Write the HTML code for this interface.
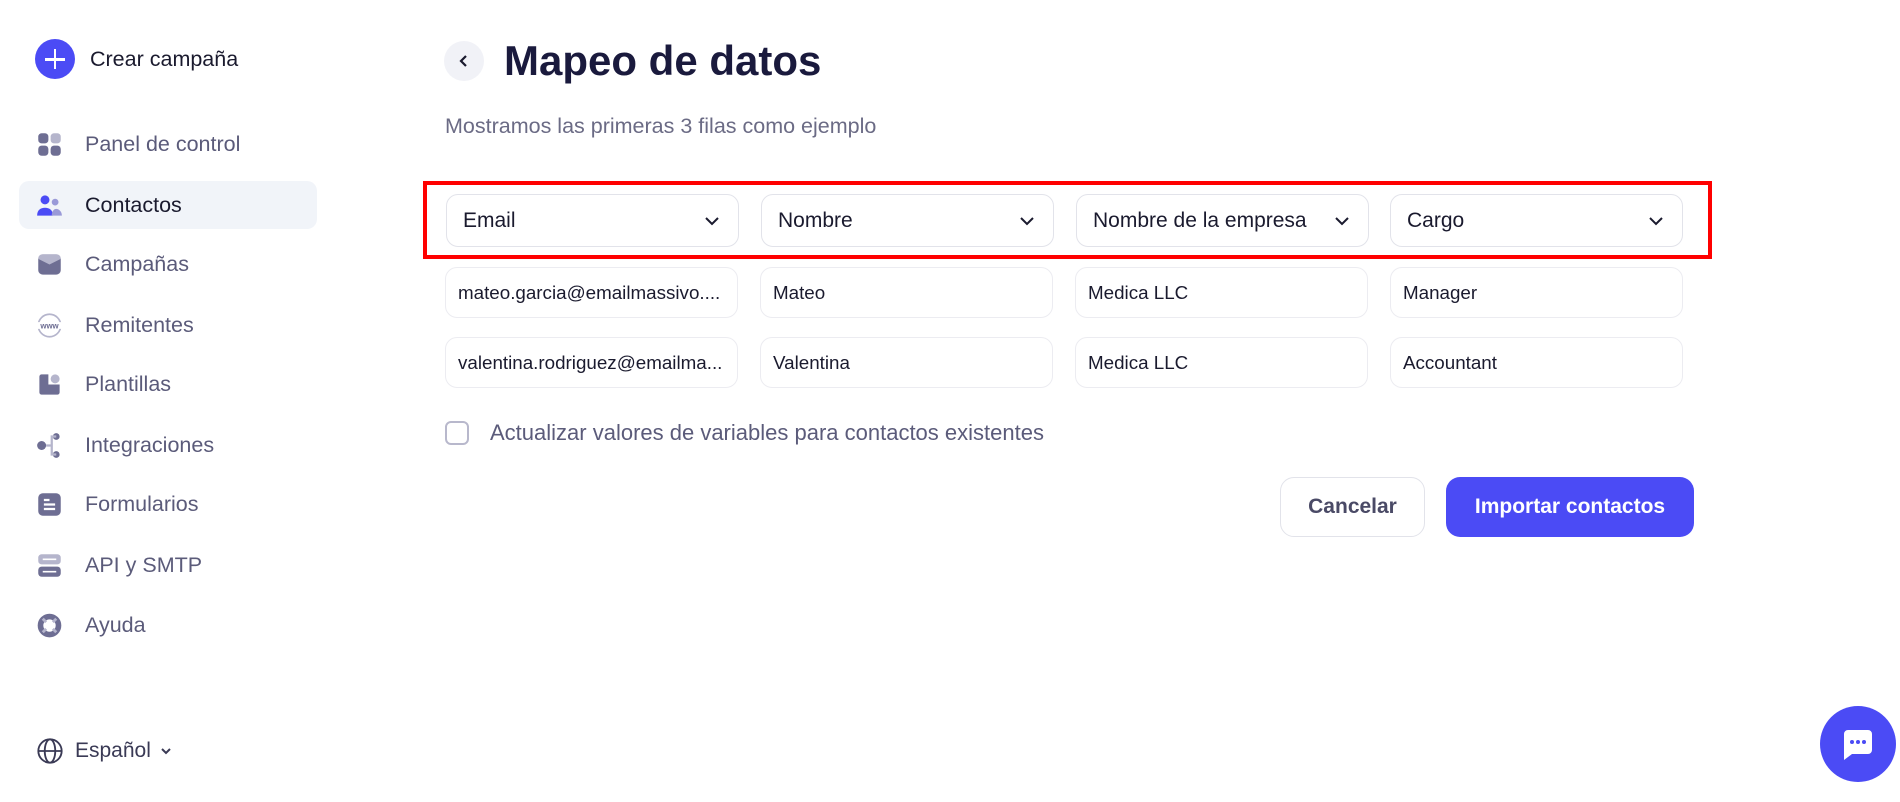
<!DOCTYPE html>
<html><head><meta charset="utf-8"><style>
*{box-sizing:border-box;margin:0;padding:0}
body{width:1900px;height:802px;background:#fff;font-family:"Liberation Sans",sans-serif;position:relative;overflow:hidden;color:#1a1a3d}
.abs{position:absolute}
.nav{position:absolute;left:19px;width:298px;height:48px;display:flex;align-items:center;font-size:21.5px;color:#5b5b7a}
.nav svg{position:absolute;left:17px;width:27px;height:27px}
.nav span{position:absolute;left:66px}
.sel{position:absolute;top:194px;width:293px;height:53px;border:1.5px solid #e2e3ea;border-radius:12px;font-size:21px;color:#1a1a2e;display:flex;align-items:center;padding-left:16px;background:#fff;white-space:nowrap}
.sel svg{position:absolute;right:18px;top:20px}
.cell{position:absolute;width:293px;height:51px;border:1.5px solid #ececf1;border-radius:12px;font-size:18.8px;color:#1a1a2e;display:flex;align-items:center;padding-left:12px;white-space:nowrap;overflow:hidden}
</style></head><body>
<div class="abs" style="left:35px;top:39px;width:40px;height:40px;border-radius:50%;background:#4b4bf5"></div>
<div class="abs" style="left:45px;top:58px;width:20px;height:2.5px;background:#fff"></div>
<div class="abs" style="left:53.75px;top:49px;width:2.5px;height:20px;background:#fff"></div>
<div class="abs" style="left:90px;top:47px;font-size:21.5px;color:#1a1a2e">Crear campaña</div>

<div class="nav" style="top:120px"><svg viewBox="0 0 24 24"><rect x="2" y="2" width="9" height="9" rx="3" fill="#6e6e93"/><rect x="13" y="2" width="9" height="9" rx="3" fill="#b5b5cc"/><rect x="2" y="13" width="9" height="9" rx="3" fill="#6e6e93"/><rect x="13" y="13" width="9" height="9" rx="3" fill="#6e6e93"/></svg><span>Panel de control</span></div>
<div class="abs" style="left:19px;top:181px;width:298px;height:48px;border-radius:10px;background:#f1f4f9"></div>
<div class="nav" style="top:181px;color:#1a1a2e"><svg viewBox="0 0 24 24"><circle cx="8" cy="7" r="4" fill="#4b4bf5"/><path d="M1 21c0-5 3-7 7-7s7 2 7 7z" fill="#4b4bf5"/><circle cx="17" cy="9" r="3" fill="#9a9ad8"/><path d="M14 21c0-4 2-6 4-6s5 2 5 6z" fill="#9a9ad8"/></svg><span>Contactos</span></div>
<div class="nav" style="top:240px"><svg viewBox="0 0 24 24"><rect x="2" y="3" width="20" height="18" rx="4" fill="#6e6e93"/><path d="M2 7c0-3 2-4 4-4h12c2 0 4 1 4 4l-10 5z" fill="#b5b5cc"/></svg><span>Campañas</span></div>
<div class="nav" style="top:301px"><svg viewBox="0 0 24 24"><circle cx="12" cy="12" r="10" fill="none" stroke="#b5b5cc" stroke-width="1.5"/><rect x="0" y="9" width="24" height="6" fill="#fff"/><text x="12" y="14.5" font-size="7" font-weight="bold" text-anchor="middle" fill="#6e6e93" font-family="Liberation Sans">www</text></svg><span>Remitentes</span></div>
<div class="nav" style="top:360px"><svg viewBox="0 0 24 24"><path d="M3 5a2 2 0 012-2h6v9h10v7a2 2 0 01-2 2H5a2 2 0 01-2-2z" fill="#6e6e93"/><circle cx="17" cy="7" r="4" fill="#b5b5cc"/></svg><span>Plantillas</span></div>
<div class="nav" style="top:421px"><svg viewBox="0 0 24 24"><circle cx="5" cy="12" r="4" fill="#6e6e93"/><circle cx="18" cy="4" r="3" fill="#6e6e93"/><circle cx="18" cy="20" r="3" fill="#6e6e93"/><path d="M18 4h-4v16h4M9 12h5" stroke="#b5b5cc" stroke-width="2" fill="none"/></svg><span>Integraciones</span></div>
<div class="nav" style="top:480px"><svg viewBox="0 0 24 24"><rect x="2" y="2" width="20" height="20" rx="4" fill="#6e6e93"/><path d="M7 8h5M7 12h10M7 16h10" stroke="#fff" stroke-width="2"/></svg><span>Formularios</span></div>
<div class="nav" style="top:541px"><svg viewBox="0 0 24 24"><rect x="2" y="2" width="20" height="9" rx="3" fill="#b5b5cc"/><rect x="2" y="13" width="20" height="9" rx="3" fill="#6e6e93"/><path d="M6 6.5h12M6 17.5h12" stroke="#fff" stroke-width="1.5"/></svg><span>API y SMTP</span></div>
<div class="nav" style="top:601px"><svg viewBox="0 0 24 24"><circle cx="12" cy="12" r="8" fill="none" stroke="#6e6e93" stroke-width="5"/><path d="M6 6l3 3M18 6l-3 3M6 18l3-3M18 18l-3-3" stroke="#b5b5cc" stroke-width="2.5"/></svg><span>Ayuda</span></div>

<svg class="abs" style="left:36px;top:737px" width="28" height="28" viewBox="0 0 24 24" fill="none" stroke="#3a3a55" stroke-width="1.6"><circle cx="12" cy="12" r="10"/><ellipse cx="12" cy="12" rx="4.5" ry="10"/><path d="M2 12h20"/></svg>
<div class="abs" style="left:75px;top:739px;font-size:21px;color:#3a3a55">Español</div>
<svg class="abs" style="left:160px;top:746px" width="12" height="10" viewBox="0 0 12 10"><path d="M2 3l4 4 4-4" stroke="#3a3a55" stroke-width="2" fill="none"/></svg>

<div class="abs" style="left:444px;top:41px;width:40px;height:40px;border-radius:50%;background:#f1f2f7"></div>
<svg class="abs" style="left:458px;top:54px" width="12" height="14" viewBox="0 0 12 14"><path d="M8 2L3 7l5 5" stroke="#1a1a2e" stroke-width="2.2" fill="none"/></svg>
<div class="abs" style="left:504px;top:37px;font-size:42px;font-weight:bold;color:#1a1a3d">Mapeo de datos</div>
<div class="abs" style="left:445px;top:114px;font-size:21.5px;color:#6b6b85">Mostramos las primeras 3 filas como ejemplo</div>

<div class="abs" style="left:423px;top:181px;width:1289px;height:78px;border:4px solid #f00"></div>
<div class="sel" style="left:446px">Email<svg width="16" height="12" viewBox="0 0 16 12"><path d="M2 3l6 6 6-6" stroke="#1a1a2e" stroke-width="2" fill="none"/></svg></div>
<div class="sel" style="left:761px">Nombre<svg width="16" height="12" viewBox="0 0 16 12"><path d="M2 3l6 6 6-6" stroke="#1a1a2e" stroke-width="2" fill="none"/></svg></div>
<div class="sel" style="left:1076px">Nombre de la empresa<svg width="16" height="12" viewBox="0 0 16 12"><path d="M2 3l6 6 6-6" stroke="#1a1a2e" stroke-width="2" fill="none"/></svg></div>
<div class="sel" style="left:1390px">Cargo<svg width="16" height="12" viewBox="0 0 16 12"><path d="M2 3l6 6 6-6" stroke="#1a1a2e" stroke-width="2" fill="none"/></svg></div>

<div class="cell" style="left:445px;top:267px">mateo.garcia@emailmassivo....</div>
<div class="cell" style="left:760px;top:267px">Mateo</div>
<div class="cell" style="left:1075px;top:267px">Medica LLC</div>
<div class="cell" style="left:1390px;top:267px">Manager</div>
<div class="cell" style="left:445px;top:337px">valentina.rodriguez@emailma...</div>
<div class="cell" style="left:760px;top:337px">Valentina</div>
<div class="cell" style="left:1075px;top:337px">Medica LLC</div>
<div class="cell" style="left:1390px;top:337px">Accountant</div>

<div class="abs" style="left:445px;top:421px;width:24px;height:24px;border:2px solid #b8b8cc;border-radius:6px"></div>
<div class="abs" style="left:490px;top:420px;font-size:22px;color:#5b5b7a">Actualizar valores de variables para contactos existentes</div>

<div class="abs" style="left:1280px;top:477px;width:145px;height:60px;border:1.5px solid #e2e3ea;border-radius:14px;font-size:21px;font-weight:bold;color:#4a4a66;display:flex;align-items:center;justify-content:center">Cancelar</div>
<div class="abs" style="left:1446px;top:477px;width:248px;height:60px;background:#4b4bf5;border-radius:14px;font-size:21px;font-weight:bold;color:#fff;display:flex;align-items:center;justify-content:center">Importar contactos</div>

<div class="abs" style="left:1820px;top:706px;width:76px;height:76px;border-radius:50%;background:#4b4bf5"></div>
<svg class="abs" style="left:1840px;top:726px" width="36" height="36" viewBox="0 0 36 36"><path d="M4 8a4 4 0 014-4h20a4 4 0 014 4v16a4 4 0 01-4 4H12l-8 6z" fill="#fff"/><circle cx="12" cy="16" r="2" fill="#4b4bf5"/><circle cx="18" cy="16" r="2" fill="#4b4bf5"/><circle cx="24" cy="16" r="2" fill="#4b4bf5"/></svg>
</body></html>
